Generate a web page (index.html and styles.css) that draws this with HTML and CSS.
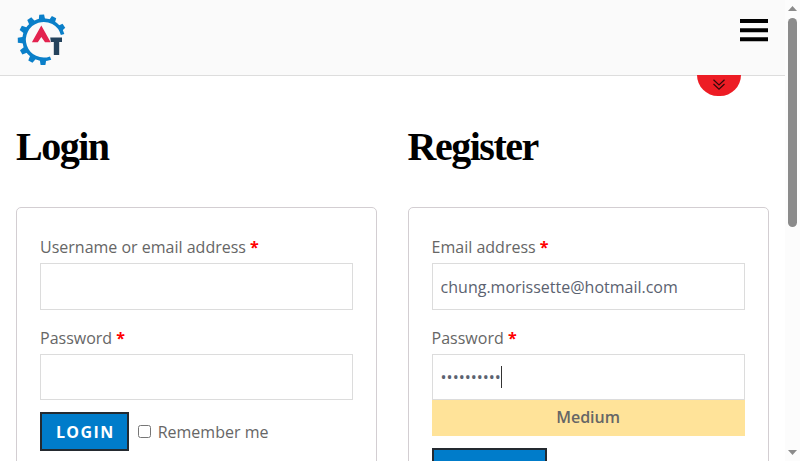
FILE: index.html
```html
<!DOCTYPE html>
<html lang="en">
<head>
<meta charset="utf-8">
<title>My account</title>
<link rel="stylesheet" href="styles.css">
</head>
<body>
<div class="page">
  <header class="header">
    <svg class="logo" width="50" height="52" viewBox="17 14 50 52">
      <g fill="#0a7fc9">
        <path id="tooth" d="M40.6 14.6h4.8l1 6h-6.8z" transform="rotate(-3 43 39.8)"/>
        <use href="#tooth" transform="rotate(29 43 39.8)"/>
        <use href="#tooth" transform="rotate(59 43 39.8)"/>
        <use href="#tooth" transform="rotate(-30 43 39.8)"/>
        <use href="#tooth" transform="rotate(-59 43 39.8)"/>
        <use href="#tooth" transform="rotate(-88 43 39.8)"/>
        <use href="#tooth" transform="rotate(-117 43 39.8)"/>
        <use href="#tooth" transform="rotate(-147 43 39.8)"/>
        <use href="#tooth" transform="rotate(-177 43 39.8)"/>
      </g>
      <path d="M62.6 34.5A19.6 19.6 0 1 0 50.6 58.1" fill="none" stroke="#0a7fc9" stroke-width="3.6"/>
      <path d="M41.3 25.6L50.7 42.3H45L41.3 37L37.8 42.3H31.9z" fill="#e3234f"/>
      <path d="M50.2 37.6H62V42.1H59.2V55H53.8V42.1H50.9z" fill="#24425c"/>
    </svg>
    <svg class="menu" width="28" height="24" viewBox="0 0 28 24"><path d="M0 2H28M0 11.2H28M0 20.3H28" stroke="#000" stroke-width="4"/></svg>
    <div class="drop">
      <svg width="12" height="12" viewBox="0 0 12 12" fill="none" stroke="#32090b" stroke-width="1.2"><path d="M.5 .8L6 6L11.5 .8M.5 5L6 10.2L11.5 5"/></svg>
    </div>
  </header>
  <main class="columns">
    <section class="column">
      <h2>Login</h2>
      <form class="card">
        <label>Username or email address <b>*</b></label>
        <div class="field"></div>
        <label>Password <b>*</b></label>
        <div class="field short"></div>
        <div class="actions">
          <button type="button">LOGIN</button>
          <input type="checkbox" id="remember">
          <span>Remember me</span>
        </div>
      </form>
    </section>
    <section class="column">
      <h2>Register</h2>
      <form class="card">
        <label>Email address <b>*</b></label>
        <div class="field">chung.morissette@hotmail.com</div>
        <label>Password <b>*</b></label>
        <div class="field short"><span class="dots">••••••••••</span><i class="caret"></i></div>
        <div class="strength">Medium</div>
        <button type="button" class="register"></button>
      </form>
    </section>
  </main>
</div>
<div class="scrollbar">
  <svg width="9" height="5" viewBox="0 0 9 5"><path d="M0 5L4.5 0L9 5z" fill="#8b8b8b"/></svg>
  <div class="thumb"></div>
  <svg class="down" width="9" height="5" viewBox="0 0 9 5"><path d="M0 0L4.5 5L9 0z" fill="#8b8b8b"/></svg>
</div>
</body>
</html>
```
FILE: styles.css
```css
* { box-sizing: border-box; }
body {
  margin: 0;
  height: 461px;
  display: flex;
  overflow: hidden;
  background: #fff;
  color: #666;
  font: 16px/24px "Open Sans", sans-serif;
}
.page { width: 785px; height: 461px; overflow: hidden; }
.header {
  position: relative;
  height: 76px;
  padding: 14px 17px;
  display: flex;
  justify-content: space-between;
  background: #fafafa;
  border-bottom: 1px solid #ddd;
}
.menu { margin-top: 5px; }
.drop {
  position: absolute;
  top: 75px;
  left: 697px;
  width: 44px;
  height: 21px;
  padding-top: 4px;
  display: flex;
  justify-content: center;
  background: #ed1c24;
  border-radius: 0 0 22px 22px;
}
.columns {
  display: grid;
  grid-template-columns: 361px 361px;
  gap: 30.6px;
  padding: 0 16px;
}
h2 {
  margin: 51px 0 40px;
  font: bold 40px/40px "Liberation Serif", serif;
  letter-spacing: -1.5px;
  color: #000;
}
.card {
  height: 320px;
  padding: 27px 23px;
  border: 1px solid #d3ced2;
  border-radius: 5px;
}
label { display: block; height: 28px; }
label b { color: #f00; }
.field {
  display: flex;
  align-items: center;
  height: 47px;
  margin-bottom: 16px;
  padding: 0 8px;
  border: 1px solid #dcdcdc;
  color: #5b6270;
}
.short { height: 46px; margin: 0; }
.dots { font-size: 16px; }
.caret { width: 1px; height: 22px; background: #333; }
.actions { display: flex; align-items: center; margin-top: 12px; }
button {
  width: 89px;
  height: 39px;
  padding: 0 0 0 1.5px;
  border: 2px solid #242a30;
  background: #007cca;
  color: #fff;
  font: bold 16px/24px "Open Sans", sans-serif;
  letter-spacing: 1.4px;
}
.actions input { width: 13px; height: 13px; margin: 0 6.7px 0 9px; }
.strength {
  height: 36px;
  padding-top: 5px;
  background: #ffe399;
  text-align: center;
  font-weight: 600;
}
.register { display: block; width: 115px; margin-top: 12px; }
.scrollbar {
  width: 15px;
  padding: 6px 0;
  display: flex;
  flex-direction: column;
  align-items: center;
  background: #fcfcfc;
}
.thumb { width: 9px; height: 209px; margin-top: 7px; border-radius: 5px; background: #8b8b8b; }
.down { margin-top: auto; }
```
